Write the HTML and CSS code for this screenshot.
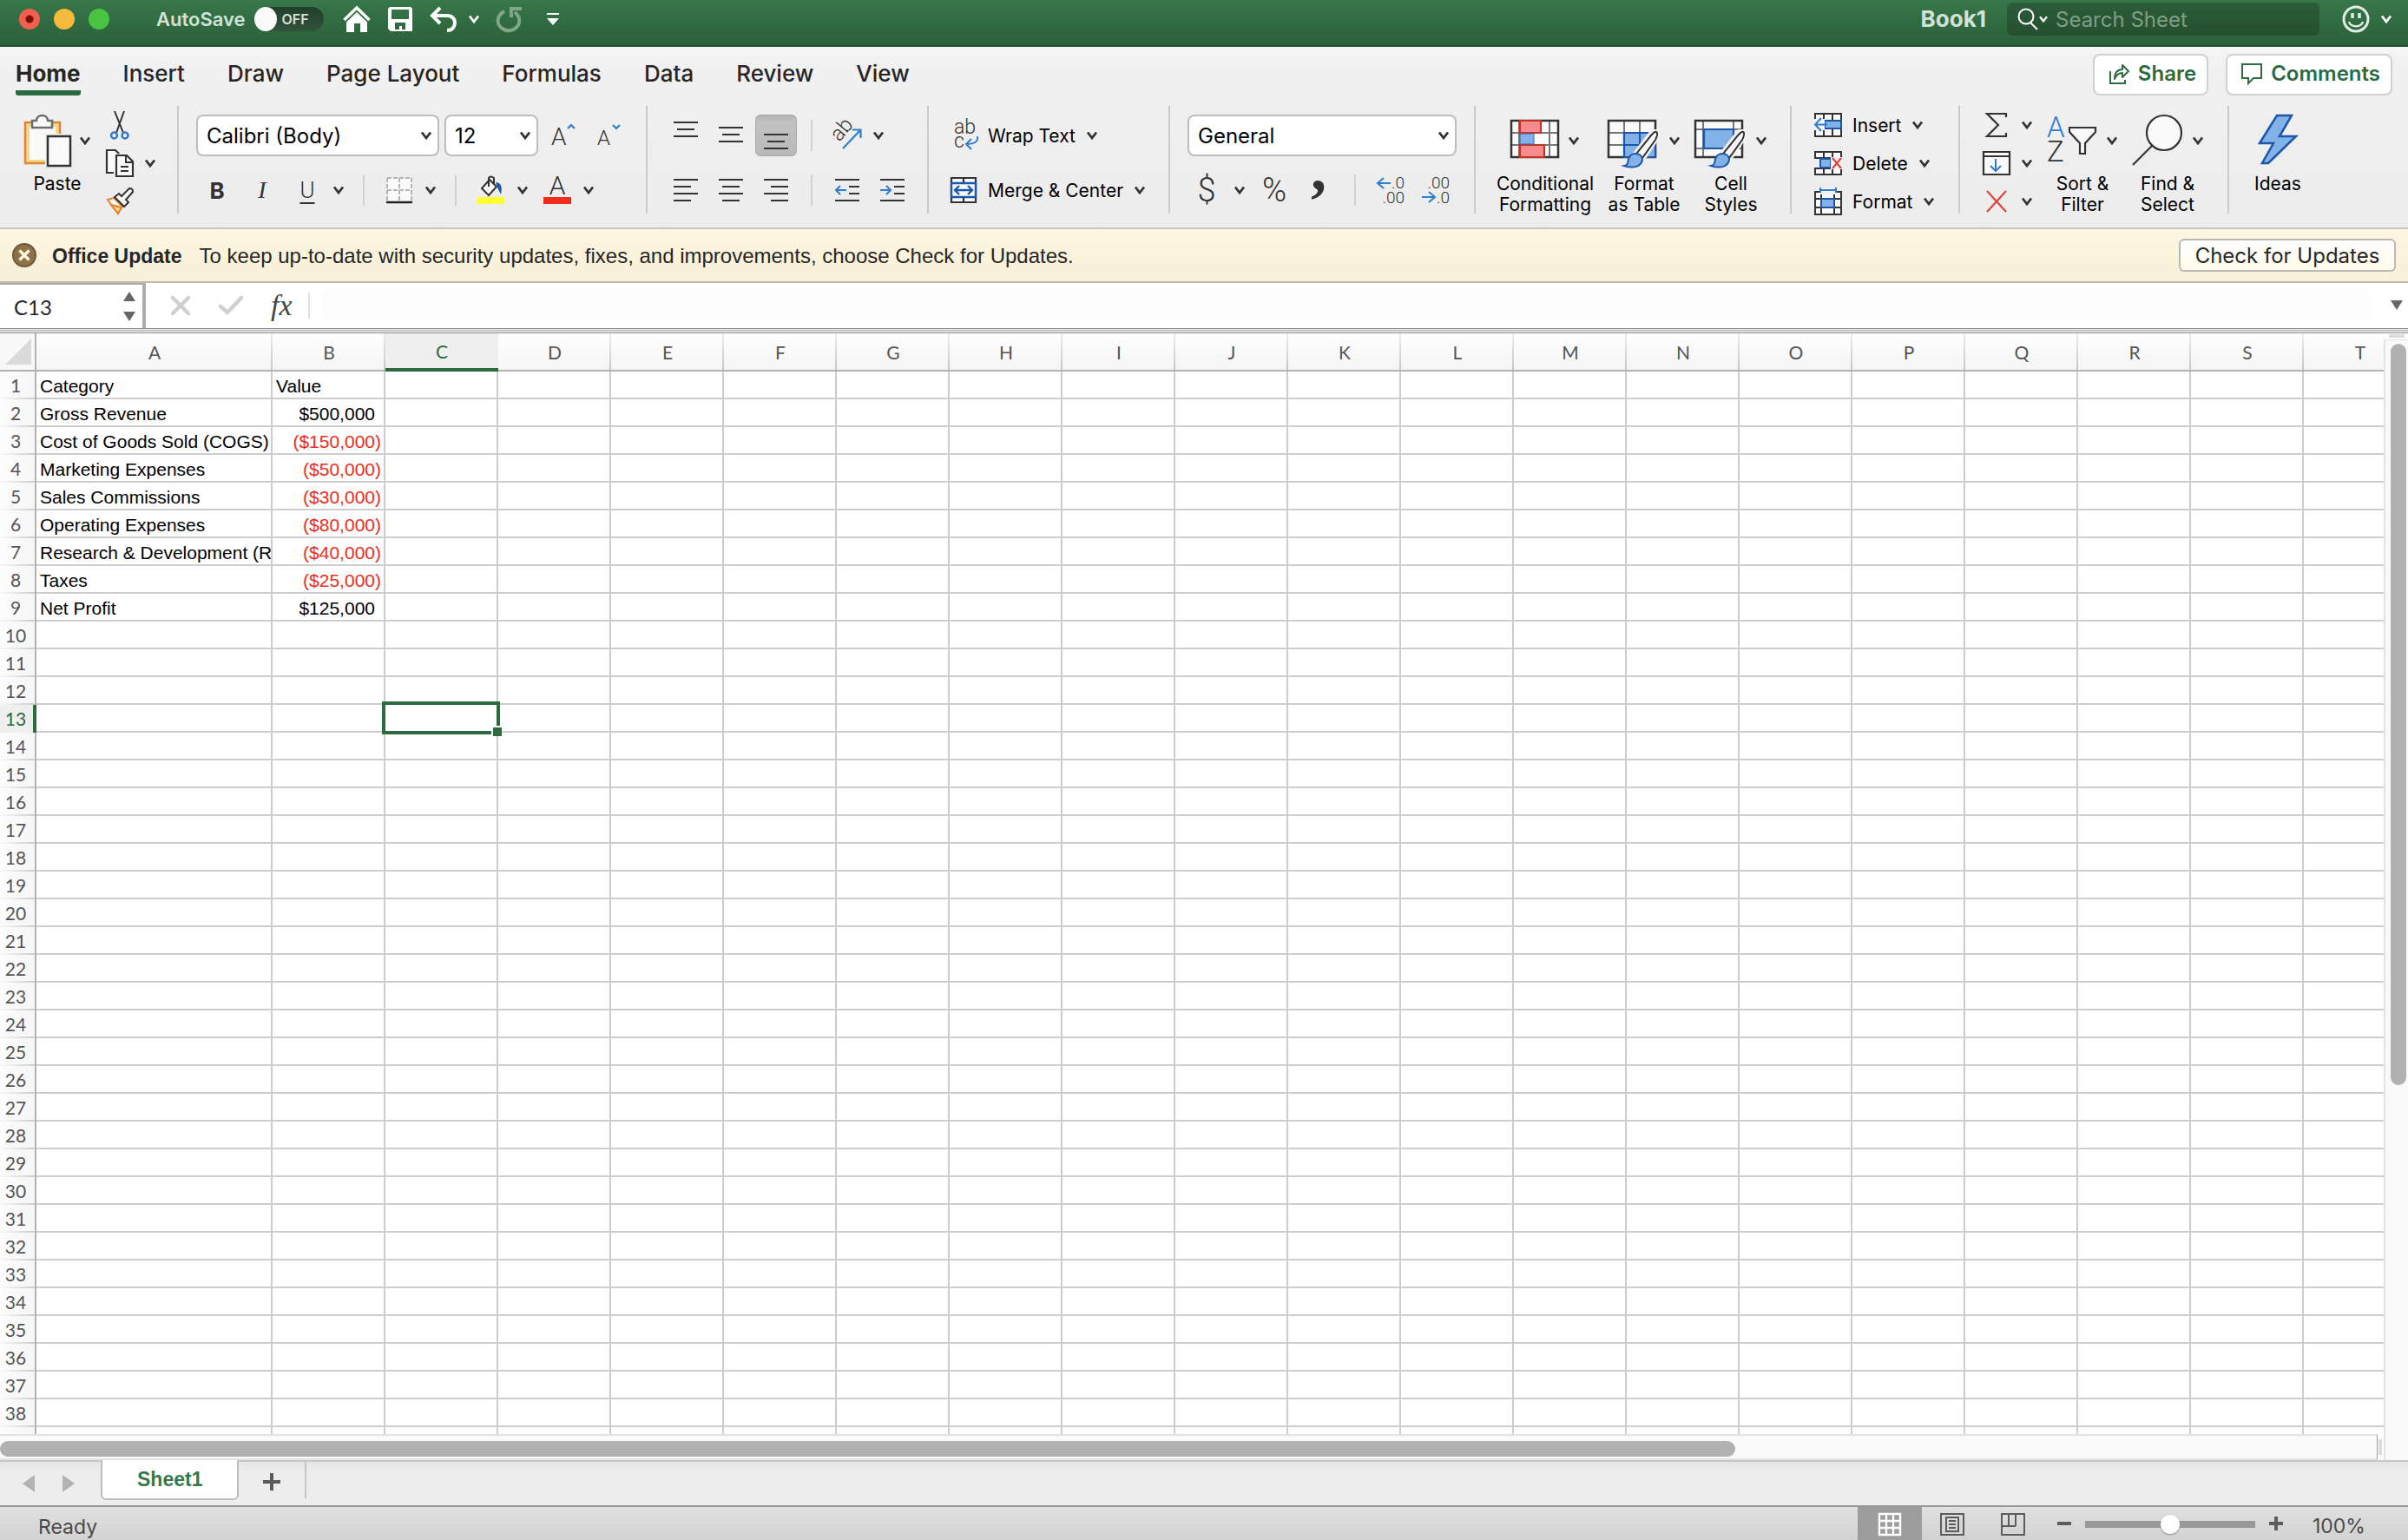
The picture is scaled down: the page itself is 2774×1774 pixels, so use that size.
FILE: index.html
```html
<!DOCTYPE html>
<html lang="en">
<head>
<meta charset="utf-8">
<title>Book1</title>
<link rel="stylesheet" href="styles.css">
<script src="grid.js" defer></script>
</head>
<body>
<svg class="defs" aria-hidden="true">
  <symbol id="chev" viewBox="0 0 14 10"><path d="M2 1.500 L7 8 L12 1.500" fill="none" stroke="currentColor" stroke-width="2.800"/></symbol>
  <symbol id="brush" viewBox="0 0 44 46">
    <path d="M40 2c3 2 2 6 0 10L26 33l-8-6L35 5c2-2 3-4 5-3z" fill="#fafafa" stroke="#f2f2f2" stroke-width="6"/>
    <path d="M41 3c2 1 1 5-1 9L25 33l-7-5L35 7c2-2 4-5 6-4z" fill="#fafafa" stroke="#333" stroke-width="2"/>
    <path d="M17 28c5 0 8 3 8 7-1 7-9 11-21 7 5-1 4-4 5-8 1-3 4-6 8-6z" fill="#83b2e8" stroke="#1c56a8" stroke-width="2"/>
  </symbol>
</svg>

<header class="titlebar">
  <div class="lights">
    <button class="light close" aria-label="Close window"></button>
    <button class="light minimise" aria-label="Minimise window"></button>
    <button class="light zoom" aria-label="Zoom window"></button>
  </div>
  <label class="autosave">AutoSave
    <span class="switch"><input type="checkbox"><span>OFF</span></span>
  </label>
  <div class="quick">
    <button aria-label="Home"><svg width="32" height="32" viewBox="0 0 32 32"><path d="M1.500 17 L16 3 L30.500 17" fill="none" stroke="#fff" stroke-width="3.500"/><path d="M4 19.500 L16 8 L28 19.500 V31 H20 V21 H13 V31 H4z" fill="#fff"/></svg></button>
    <button aria-label="Save"><svg width="28" height="28" viewBox="0 0 28 28"><path fill="#fff" fill-rule="evenodd" d="M2 0H26L28 2V28H3L0 25V2zM4 3V14H24V3zM8 18V26H13V22H16V26H20V18z"/></svg></button>
    <button class="undo" aria-label="Undo"><svg width="32" height="30" viewBox="0 0 32 30"><path d="M12 2L3 11L12 20M3 11H20C26 11 29 15 29 19C29 24 26 28 20 28" fill="none" stroke="#fff" stroke-width="4"/></svg></button>
    <button aria-label="Undo options"><svg class="chev"><use href="#chev"/></svg></button>
    <button class="redo" aria-label="Repeat"><svg width="32" height="32" viewBox="0 0 32 32"><path d="M10 7C1 12 0 22 8 27C15 32 25 28 27 20C28 15 26 11 22 8M18 14V4H30" fill="none" stroke="#7fa88a" stroke-width="4"/></svg></button>
    <button class="more" aria-label="Customise toolbar"><svg width="16" height="16" viewBox="0 0 16 16"><path d="M1 1H15V3H1zM1 7H15L8 15z" fill="#fff"/></svg></button>
  </div>
  <h1 class="book">Book1</h1>
  <label class="search">
    <svg width="24" height="26" viewBox="0 0 24 26"><circle cx="10" cy="10" r="8.500" fill="none" stroke="#fff" stroke-width="2"/><path d="M15 17L23 25" stroke="#fff" stroke-width="2"/></svg>
    <svg class="chev small"><use href="#chev"/></svg>
    <input type="search" placeholder="Search Sheet" aria-label="Search Sheet">
  </label>
  <button class="smiley" aria-label="Feedback">
    <svg width="32" height="32" viewBox="0 0 32 32" fill="none" stroke="#e2ece4" stroke-width="3"><circle cx="16" cy="16" r="14"/><path d="M12 9V15M20 9V15" stroke-width="3.500"/><path d="M8 19C10 26 22 26 24 19" stroke-width="2.500"/></svg>
    <svg class="chev"><use href="#chev"/></svg>
  </button>
</header>

<section class="ribbon">
  <nav class="tabs">
    <a href="#" class="current">Home</a><a href="#">Insert</a><a href="#">Draw</a><a href="#">Page Layout</a><a href="#">Formulas</a><a href="#">Data</a><a href="#">Review</a><a href="#">View</a>
    <div class="share">
      <button><svg width="24" height="24" viewBox="0 0 24 24" fill="none" stroke="#2b6b3f" stroke-width="2"><path d="M2 9V23H19V19"/><path d="M7 18C7 11 10 7 16 7V2L23 9L16 16V11C12 11 9 13 7 18z" stroke-linejoin="round"/></svg>Share</button>
      <button><svg width="24" height="24" viewBox="0 0 24 24" fill="none" stroke="#2b6b3f" stroke-width="2"><path d="M1 1H23V17H14L8 23V17H1z"/></svg>Comments</button>
    </div>
  </nav>

  <div class="tools">
    <div class="group clipboard">
      <button class="big">
        <span class="pic"><svg width="56" height="60" viewBox="0 0 56 60"><path d="M2 9H42V56H2z" fill="#f4d88a" stroke="#e08535" stroke-width="2.500"/><path d="M7 14H37V52H7z" fill="#fafafa"/><path d="M10 7H15C15 -1 28 -1 28 7H33V15H10z" fill="#fafafa" stroke="#6d6d6d" stroke-width="2.500"/><path d="M25 22H47V30H55V60H25z" fill="#efefef"/><path d="M28 25H54V59H28z" fill="#fafafa" stroke="#333" stroke-width="2.500"/></svg><svg class="chev"><use href="#chev"/></svg></span>
        <span class="cap">Paste</span>
      </button>
      <div class="stack">
        <button class="line" aria-label="Cut"><svg width="32" height="32" viewBox="0 0 32 32" fill="none" stroke="#333" stroke-width="2"><path d="M10 0L20 25M21 0L12 25"/><circle cx="9.500" cy="28" r="3.500" stroke="#2f7ccc" stroke-width="2.500"/><circle cx="22" cy="28" r="3.500" stroke="#2f7ccc" stroke-width="2.500"/></svg></button>
        <button class="line" aria-label="Copy"><svg width="32" height="32" viewBox="0 0 32 32" fill="#fafafa" stroke="#333" stroke-width="2.200"><path d="M9 27H1V1H11L15 5"/><path d="M12 7H24L31 14V31H12z"/><path d="M23 7V15H31M17 20H26M17 25H26" fill="none" stroke-width="2"/></svg><svg class="chev"><use href="#chev"/></svg></button>
        <button class="line" aria-label="Format Painter"><svg width="32" height="32" viewBox="0 0 32 32"><path d="M2 14L9 12L19 22L14 30z" fill="#fafafa" stroke="#e08535" stroke-width="2"/><path d="M6 20L18 23L14 30z" fill="#f4d88a" stroke="#e08535" stroke-width="2"/><path d="M10 11L15 7L18 10L27 1Q31 1 31 5L23 14L26 17L21 22z" fill="#fafafa" stroke="#333" stroke-width="2"/></svg></button>
      </div>
    </div>
    <span class="divider"></span>

    <div class="group rows">
      <div class="row">
        <span class="pick font"><select aria-label="Font"><option>Calibri (Body)</option></select><svg class="chev"><use href="#chev"/></svg></span>
        <span class="pick size"><select aria-label="Font size"><option>12</option></select><svg class="chev"><use href="#chev"/></svg></span>
        <button class="tool" aria-label="Increase font size"><svg width="28" height="30" viewBox="0 0 28 30"><text x="1" y="26" class="glyph" font-size="28">A</text><path d="M20 7L24 3L28 7" fill="none" stroke="#2f7ccc" stroke-width="2.200"/></svg></button>
        <button class="tool" aria-label="Decrease font size"><svg width="28" height="30" viewBox="0 0 28 30"><text x="2" y="26" class="glyph" font-size="24">A</text><path d="M20 3L24 7L28 3" fill="none" stroke="#2f7ccc" stroke-width="2.200"/></svg></button>
      </div>
      <div class="row">
        <button class="tool bold">B</button>
        <button class="tool italic">I</button>
        <span class="split tight"><button class="tool underline">U</button><button class="drop" aria-label="Underline options"><svg class="chev"><use href="#chev"/></svg></button></span>
        <span class="sep"></span>
        <span class="split"><button class="icon" aria-label="Borders"><svg width="32" height="32" viewBox="0 0 32 32"><path d="M2 2H30V30H2z" fill="#fafafa"/><path d="M2 2H30M2 16H30M2 2V28M16 2V28M30 2V28" stroke="#b5b5b5" stroke-width="2" stroke-dasharray="5 2"/><path d="M1 30H31" stroke="#222" stroke-width="2.500"/></svg></button><button class="drop" aria-label="Border options"><svg class="chev"><use href="#chev"/></svg></button></span>
        <span class="sep"></span>
        <span class="split"><button class="icon" aria-label="Fill colour"><svg width="32" height="32" viewBox="0 0 32 32"><path d="M5 14L14 4L22 12L13 22z" fill="#fafafa" stroke="#333" stroke-width="2"/><path d="M13 12V2Q15 -1 19 2V10" fill="none" stroke="#333" stroke-width="2"/><path d="M21 7C27 7 29 12 27 21L23 13z" fill="#1c56a8"/><path d="M0 24H32V32H0z" fill="#ffff35"/></svg></button><button class="drop" aria-label="Fill options"><svg class="chev"><use href="#chev"/></svg></button></span>
        <span class="split"><button class="icon" aria-label="Font colour"><svg width="32" height="32" viewBox="0 0 32 32"><text x="16" y="21" text-anchor="middle" class="glyph" font-size="30">A</text><path d="M0 24H32V32H0z" fill="#f02d1a"/></svg></button><button class="drop" aria-label="Font colour options"><svg class="chev"><use href="#chev"/></svg></button></span>
      </div>
    </div>
    <span class="divider"></span>

    <div class="group rows align">
      <div class="row">
        <button class="tool" aria-label="Top align"><svg width="28" height="32" viewBox="0 0 28 32"><path class="ink" d="M0 1H28M4 9H24M0 17H28"/></svg></button>
        <button class="tool" aria-label="Middle align"><svg width="28" height="32" viewBox="0 0 28 32"><path class="ink" d="M0 7H28M4 15H24M0 23H28"/></svg></button>
        <button class="tool pressed" aria-label="Bottom align"><svg width="28" height="32" viewBox="0 0 28 32"><path class="ink" d="M0 15H28M4 23H24M0 31H28"/></svg></button>
        <span class="sep"></span>
        <span class="split"><button class="icon" aria-label="Orientation"><svg width="32" height="32" viewBox="0 0 32 32"><text transform="translate(7 24) rotate(-50)" class="glyph" font-size="24">ab</text><path d="M11 31L31 10M22 9.500H31.500V19" fill="none" stroke="#2f7ccc" stroke-width="2.200"/></svg></button><button class="drop" aria-label="Orientation options"><svg class="chev"><use href="#chev"/></svg></button></span>
      </div>
      <div class="row">
        <button class="tool" aria-label="Align left"><svg width="28" height="26" viewBox="0 0 28 26"><path class="ink" d="M0 1H28M0 9H20M0 17H28M0 25H20"/></svg></button>
        <button class="tool" aria-label="Centre"><svg width="28" height="26" viewBox="0 0 28 26"><path class="ink" d="M0 1H28M4 9H24M0 17H28M4 25H24"/></svg></button>
        <button class="tool" aria-label="Align right"><svg width="28" height="26" viewBox="0 0 28 26"><path class="ink" d="M0 1H28M8 9H28M0 17H28M8 25H28"/></svg></button>
        <span class="sep"></span>
        <button class="tool" aria-label="Decrease indent"><svg width="28" height="26" viewBox="0 0 28 26"><path class="ink" d="M0 1H28M16 9H28M16 17H28M0 25H28"/><path class="blue" d="M13 13H1M6 8L1 13L6 18"/></svg></button>
        <button class="tool" aria-label="Increase indent"><svg width="28" height="26" viewBox="0 0 28 26"><path class="ink" d="M0 1H28M16 9H28M16 17H28M0 25H28"/><path class="blue" d="M0 13H12M7 8L12 13L7 18"/></svg></button>
      </div>
    </div>
    <span class="divider"></span>

    <div class="group rows wrap">
      <div class="row"><button class="line"><svg width="32" height="32" viewBox="0 0 32 32"><text x="5" y="14" class="glyph" font-size="23">ab</text><text x="5" y="30" class="glyph" font-size="23">c</text><path class="blue" d="M32 17C33 23 29 26 19 26M25 20L19 26L25 32"/></svg><span>Wrap Text</span><svg class="chev"><use href="#chev"/></svg></button></div>
      <div class="row"><button class="line"><svg width="32" height="32" viewBox="0 0 32 32"><path d="M2 2H30V30H2zM16 2V8M16 24V30" fill="#fafafa" stroke="#333" stroke-width="2.200"/><path d="M2 8H30V24H2z" fill="#fafafa" stroke="#1c56a8" stroke-width="2.400"/><path d="M6 16H26M11 11L6 16L11 21M21 11L26 16L21 21" fill="none" stroke="#1c56a8" stroke-width="2.400"/></svg><span>Merge &amp; Center</span><svg class="chev"><use href="#chev"/></svg></button></div>
    </div>
    <span class="divider"></span>

    <div class="group rows number">
      <div class="row"><span class="pick format"><select aria-label="Number format"><option>General</option></select><svg class="chev"><use href="#chev"/></svg></span></div>
      <div class="row">
        <span class="split money"><button class="tool symbol">$</button><button class="drop" aria-label="Currency options"><svg class="chev"><use href="#chev"/></svg></button></span>
        <button class="tool symbol">%</button>
        <button class="tool" aria-label="Comma style"><svg width="24" height="32" viewBox="0 0 24 32"><text x="2" y="16" class="comma">,</text></svg></button>
        <span class="sep"></span>
        <button class="tool" aria-label="Increase decimal"><svg width="32" height="32" viewBox="0 0 32 32"><text x="32" y="14" text-anchor="end" class="glyph" font-size="19">.0</text><text x="32" y="31" text-anchor="end" class="glyph" font-size="19">.00</text><path class="blue" d="M16 8H1M8 2L1 8L8 14"/></svg></button>
        <button class="tool" aria-label="Decrease decimal"><svg width="32" height="32" viewBox="0 0 32 32"><text x="32" y="14" text-anchor="end" class="glyph" font-size="19">.00</text><text x="32" y="31" text-anchor="end" class="glyph" font-size="19">.0</text><path class="blue" d="M0 24H15M8 18L15 24L8 30"/></svg></button>
      </div>
    </div>
    <span class="divider"></span>

    <div class="group styles">
      <button class="big conditional">
        <span class="pic"><svg width="56" height="60" viewBox="0 0 56 60"><path d="M1 7H55V49H1z" fill="#fafafa"/><path d="M10 7V49M45 7V49M1 21H55M1 35H55" stroke="#777" stroke-width="2"/><path d="M1 7H55V49H1z" fill="none" stroke="#333" stroke-width="2.500"/><path d="M11 7H35V21H11zM11 35H39V49H11z" fill="#f58d90" stroke="#c8301f" stroke-width="2.200"/><path d="M11 22H27V34H11z" fill="#83b2e8" stroke="#2f67b5" stroke-width="1"/></svg><svg class="chev"><use href="#chev"/></svg></span>
        <span class="cap">Conditional Formatting</span>
      </button>
      <button class="big table">
        <span class="pic"><svg width="60" height="60" viewBox="0 0 60 60"><path d="M1 7H55V49H1z" fill="#fafafa"/><path d="M19 7V49M37 7V49M1 21H55M1 35H55" stroke="#777" stroke-width="2"/><path d="M1 7H55V49H1z" fill="none" stroke="#333" stroke-width="2.500"/><path d="M19 21H55V49H19zM37 21V49M19 35H55" fill="#83b2e8" stroke="#1c56a8" stroke-width="2.200"/><use href="#brush" x="14" y="17" width="46" height="46"/></svg><svg class="chev"><use href="#chev"/></svg></span>
        <span class="cap">Format<br>as Table</span>
      </button>
      <button class="big cells">
        <span class="pic"><svg width="60" height="60" viewBox="0 0 60 60"><path d="M1 7H55V49H1z" fill="#fafafa"/><path d="M10 7V49M45 7V49M1 17H55M1 39H55" stroke="#777" stroke-width="2"/><path d="M1 7H55V49H1z" fill="none" stroke="#333" stroke-width="2.500"/><path d="M11 17H45V39H11z" fill="#83b2e8" stroke="#1c56a8" stroke-width="2.200"/><use href="#brush" x="14" y="17" width="46" height="46"/></svg><svg class="chev"><use href="#chev"/></svg></span>
        <span class="cap">Cell<br>Styles</span>
      </button>
    </div>
    <span class="divider"></span>

    <div class="group stack cellops">
      <button class="line"><svg width="32" height="32" viewBox="0 0 32 32"><path d="M1 3H31V29H1zM11 3V29M21 3V29M1 11H31M1 20H31" fill="#fafafa" stroke="#333" stroke-width="2"/><path d="M12 11H31V20H12z" fill="#83b2e8" stroke="#1c56a8" stroke-width="2"/><path d="M0 9H12V22H0z" fill="#f4f4f4"/><path class="blue" d="M15 15.500H1M8 8L1 15.500L8 23"/></svg><span>Insert</span><svg class="chev"><use href="#chev"/></svg></button>
      <button class="line"><svg width="32" height="32" viewBox="0 0 32 32"><path d="M1 3H31V10H1zM1 22H31V29H1zM11 3V10M21 3V10M11 22V29M21 22V29" fill="#fafafa" stroke="#333" stroke-width="2"/><path d="M7 11H19V21H7z" fill="#83b2e8" stroke="#1c56a8" stroke-width="2"/><path d="M19 9H32V23H19z" fill="#f2f2f2"/><path d="M21 10L31 22M31 10L21 22" stroke="#e0443a" stroke-width="2.200"/></svg><span>Delete</span><svg class="chev"><use href="#chev"/></svg></button>
      <button class="line"><svg width="32" height="32" viewBox="0 0 32 32"><path d="M1 5H31V31H1zM8 5V31M23 5V31M1 13H31M1 23H31" fill="#fafafa" stroke="#333" stroke-width="2"/><path d="M8 13H23V23H8z" fill="#83b2e8" stroke="#1c56a8" stroke-width="2"/><path d="M6 0H26V8H6z" fill="#f2f2f2"/><path class="blue" d="M7 3H25M7 0V6M25 0V6"/></svg><span>Format</span><svg class="chev"><use href="#chev"/></svg></button>
    </div>
    <span class="divider"></span>

    <div class="group editing">
      <div class="stack">
        <button class="line" aria-label="AutoSum"><svg width="32" height="32" viewBox="0 0 32 32"><path d="M27 7V3H5L18 16L5 29H27V25" fill="none" stroke="#333" stroke-width="2.200"/></svg><svg class="chev"><use href="#chev"/></svg></button>
        <button class="line" aria-label="Fill"><svg width="32" height="32" viewBox="0 0 32 32"><path d="M1 3H31V29H1zM1 8H31" fill="#fafafa" stroke="#333" stroke-width="2.200"/><path class="blue" d="M15 11V25M9 19L15 25L21 19"/></svg><svg class="chev"><use href="#chev"/></svg></button>
        <button class="line" aria-label="Clear"><svg width="32" height="32" viewBox="0 0 32 32"><path d="M5 4L27 28M27 4L5 28" stroke="#e0443a" stroke-width="2.200"/></svg><svg class="chev"><use href="#chev"/></svg></button>
      </div>
      <button class="big">
        <span class="pic"><svg width="58" height="60" viewBox="0 0 58 60"><text x="0" y="26" font-size="33" class="glyph first">A</text><text x="0" y="54" font-size="33" class="glyph">Z</text><path d="M26 15H56V20L44 33V45H38V33L26 20z" fill="#fafafa" stroke="#333" stroke-width="2.200"/></svg><svg class="chev"><use href="#chev"/></svg></span>
        <span class="cap">Sort &amp;<br>Filter</span>
      </button>
      <button class="big">
        <span class="pic"><svg width="60" height="60" viewBox="0 0 60 60"><path d="M24 36L2 58" stroke="#333" stroke-width="2.200"/><circle cx="38" cy="21" r="20" fill="#fafafa" stroke="#333" stroke-width="2.200"/></svg><svg class="chev"><use href="#chev"/></svg></span>
        <span class="cap">Find &amp;<br>Select</span>
      </button>
    </div>
    <span class="divider"></span>

    <div class="group ideas">
      <button class="big">
        <span class="pic"><svg width="46" height="60" viewBox="0 0 46 60"><path d="M22 1H39L25 25H44L12 56H5L18 33H2z" fill="#83b2e8" stroke="#1c56a8" stroke-width="2.500"/></svg></span>
        <span class="cap">Ideas</span>
      </button>
    </div>
  </div>
</section>

<section class="notice">
  <button class="dismiss" aria-label="Dismiss"><svg width="28" height="28" viewBox="0 0 28 28"><circle cx="14" cy="14" r="13" fill="#8d7147" stroke="#6f5a3a" stroke-width="2"/><path d="M8.500 8.500L19.500 19.500M19.500 8.500L8.500 19.500" stroke="#fff6df" stroke-width="3.500"/></svg></button>
  <strong>Office Update</strong>
  <p>To keep up-to-date with security updates, fixes, and improvements, choose Check for Updates.</p>
  <button class="check">Check for Updates</button>
</section>

<section class="formula">
  <div class="namebox">
    <input type="text" value="C13" aria-label="Name box">
    <svg width="14" height="34" viewBox="0 0 14 34"><path d="M7 0L14 11H0zM7 34L14 23H0z" fill="#666"/></svg>
  </div>
  <button aria-label="Cancel"><svg width="24" height="24" viewBox="0 0 24 24"><path d="M3 3L21 21M21 3L3 21" stroke="#d0d0d0" stroke-width="4.500" stroke-linecap="round"/></svg></button>
  <button aria-label="Enter"><svg width="28" height="24" viewBox="0 0 28 24"><path d="M2 13L10 20L26 3" fill="none" stroke="#d0d0d0" stroke-width="4.500" stroke-linecap="round"/></svg></button>
  <button class="fx">fx</button>
  <span class="bar"></span>
  <input class="entry" type="text" aria-label="Formula">
  <button class="expand" aria-label="Expand formula bar"><svg width="14" height="12" viewBox="0 0 14 12"><path d="M0 0H14L7 11z" fill="#666"/></svg></button>
</section>

<main class="sheet">
  <div class="cells"><table><thead></thead><tbody></tbody></table></div>
  <div class="vscroll"><div class="grip"></div><div class="track"><div class="thumb"></div></div></div>
</main>
<div class="hscroll"><div class="track"><div class="thumb"></div></div><div class="grip"></div><div class="corner"></div></div>

<nav class="sheets">
  <button class="step" aria-label="Previous sheet"><svg width="14" height="20" viewBox="0 0 14 20"><path d="M14 0V20L0 10z" fill="#b3b3b3"/></svg></button>
  <button class="step" aria-label="Next sheet"><svg width="14" height="20" viewBox="0 0 14 20"><path d="M0 0V20L14 10z" fill="#b3b3b3"/></svg></button>
  <a href="#" class="sheettab">Sheet1</a>
  <button class="add" aria-label="New sheet"><svg width="20" height="20" viewBox="0 0 20 20"><path d="M10 0V20M0 10H20" stroke="#5a5a5a" stroke-width="4"/></svg></button>
</nav>

<footer class="status">
  <span class="ready">Ready</span>
  <button class="view on" aria-label="Normal view"><svg width="26" height="28" viewBox="0 0 26 28"><path d="M1 2H25V26H1zM9 2V26M17 2V26M1 10H25M1 18H25" fill="none" stroke="#fff" stroke-width="2.400"/></svg></button>
  <button class="view" aria-label="Page layout"><svg width="28" height="28" viewBox="0 0 28 28"><path d="M1 2H27V26H1zM7 6H21V22H7zM10 10H18M10 14H18M10 18H18" fill="none" stroke="#5c5c5c" stroke-width="2"/></svg></button>
  <button class="view" aria-label="Page break preview"><svg width="28" height="28" viewBox="0 0 28 28"><path d="M1 2H27V26H1zM9 2V16M17 2V16M1 16H17" fill="none" stroke="#5c5c5c" stroke-width="2"/></svg></button>
  <button class="step" aria-label="Zoom out"><svg width="16" height="16" viewBox="0 0 16 16"><path d="M0 8H16" stroke="#5c5c5c" stroke-width="4"/></svg></button>
  <input type="range" min="0" max="100" value="50" aria-label="Zoom">
  <button class="step" aria-label="Zoom in"><svg width="16" height="16" viewBox="0 0 16 16"><path d="M0 8H16M8 0V16" stroke="#5c5c5c" stroke-width="4"/></svg></button>
  <span class="percent">100%</span>
</footer>
</body>
</html>
```
FILE: styles.css
```css
*, *::before, *::after { box-sizing: border-box; }
body {
  margin: 0;
  height: 100vh;
  display: flex;
  flex-direction: column;
  overflow: hidden;
  background: #fff;
  color: #000;
  font-family: Inter, "Liberation Sans", sans-serif;
  font-size: 21px;
}
button, input, select { font: inherit; color: inherit; margin: 0; }
button {
  padding: 0;
  border: 0;
  background: none;
  display: flex;
  align-items: center;
  justify-content: center;
  flex: none;
}
a { color: inherit; text-decoration: none; }
svg { display: block; flex: none; overflow: visible; }
.defs { position: absolute; width: 0; height: 0; }
.chev { width: 14px; height: 10px; color: #333; }
.chev.small { width: 12px; height: 8px; }

/* Title bar */
.titlebar {
  flex: none;
  height: 54px;
  display: flex;
  align-items: center;
  padding: 0 18px 8px 22px;
  background: linear-gradient(#37774a, #2a6038);
  border-bottom: 2px solid #234f2f;
  color: #d3e2d6;
}
.titlebar .chev { color: #fff; }
.lights { display: flex; gap: 16px; }
.light { width: 24px; height: 24px; border-radius: 50%; }
.close { background: radial-gradient(#7a0f08 0 4px, #f1604f 5px); }
.minimise { background: #f5b93b; }
.zoom { background: #4ac342; }
.autosave {
  display: flex;
  align-items: center;
  gap: 10px;
  margin-left: 54px;
  font-size: 22px;
  font-weight: 600;
}
.switch { display: grid; align-items: center; }
.switch > * { grid-area: 1 / 1; }
.switch input {
  appearance: none;
  width: 80px;
  height: 28px;
  border-radius: 14px;
  background: linear-gradient(#21402b, #33523d);
}
.switch input::before {
  content: "";
  display: block;
  width: 26px;
  height: 28px;
  border-radius: 50%;
  background: #fafafa;
}
.switch span { padding-left: 32px; font-size: 16px; }
.quick { display: flex; align-items: center; margin-left: 22px; gap: 20px; }
.quick .undo { margin-right: -8px; }
.quick .redo { margin: 0 6px 0 -2px; }
.book { margin: 0 24px 0 auto; font-size: 26px; font-weight: 700; line-height: 32px; }
.search {
  width: 360px;
  height: 38px;
  display: flex;
  align-items: center;
  padding: 0 12px;
  border-radius: 6px;
  background: linear-gradient(#2c5d3a, #254f31);
}
.search input {
  flex: 1;
  min-width: 0;
  padding: 0 8px;
  border: 0;
  background: none;
  font-size: 24px;
  appearance: none;
}
.search input::placeholder { color: #7d9f86; opacity: 1; }
.smiley { gap: 12px; margin-left: 26px; }

/* Ribbon */
.ribbon {
  flex: none;
  height: 210px;
  border-bottom: 2px solid #c6c4c6;
  background: linear-gradient(#f6f6f6, #f1f1f1 20px, #ececec);
}
.tabs {
  height: 68px;
  display: flex;
  align-items: flex-start;
  gap: 49px;
  padding: 8px 18px 0;
  font-size: 26px;
  font-weight: 500;
  line-height: 46px;
  color: #262626;
}
.tabs a { white-space: nowrap; }
.tabs .current { height: 48px; border-bottom: 6px solid #2b6b3f; border-radius: 0 0 3px 3px; font-weight: 700; }
.share { display: flex; gap: 20px; margin-left: auto; }
.share button {
  height: 48px;
  gap: 10px;
  padding: 0 12px 2px 16px;
  border: 2px solid #d0d0d0;
  border-radius: 8px;
  background: #fff;
  color: #2b6b3f;
  font-size: 24px;
  font-weight: 600;
}
.tools { display: flex; align-items: flex-start; white-space: nowrap; }
.divider { flex: none; width: 2px; height: 124px; background: #cacaca; }
.group { flex: none; display: flex; align-items: flex-start; }
.rows { flex-direction: column; gap: 15px; padding: 10px 20px 0; }
.row { display: flex; align-items: center; height: 48px; gap: 4px; }
.tool { width: 48px; height: 48px; }
.icon { width: 32px; height: 48px; }
.drop { width: 24px; height: 48px; }
.pressed {
  border: 1px solid #aaa;
  border-radius: 6px;
  background: linear-gradient(#b2b2b2, #c2c2c2 8px, #b9b9b9);
}
.split { display: flex; gap: 8px; margin-left: 8px; }
.split.tight { gap: 0; margin-left: 0; }
.sep { width: 2px; height: 36px; margin: 0 12px; background: #d2d2d2; }
.ink { fill: none; stroke: #333; stroke-width: 2px; }
.blue { fill: none; stroke: #2f7ccc; stroke-width: 2px; }
.glyph { font-family: Roboto, "Liberation Sans", sans-serif; font-weight: 300; fill: #333; }
.glyph.first { fill: #2f7ccc; }
.comma { font-family: "Liberation Serif", serif; font-weight: 700; font-size: 72px; fill: #333; }
.bold { font-weight: 700; font-size: 26px; color: #333; }
.italic { font-family: "Liberation Serif", serif; font-style: italic; font-size: 28px; color: #333; }
.underline { font-family: Roboto, sans-serif; text-decoration: underline; text-underline-offset: 5px; font-size: 26px; font-weight: 300; color: #333; }
.symbol { font-family: Roboto, sans-serif; font-weight: 300; font-size: 38px; color: #333; }
.money { gap: 4px; margin-left: 0; }
.money .tool { width: 44px; }
.pick { display: grid; align-items: center; }
.pick > * { grid-area: 1 / 1; }
.pick .chev { justify-self: end; margin-right: 8px; pointer-events: none; }
.pick select {
  appearance: none;
  height: 48px;
  width: 100%;
  padding: 0 28px 0 10px;
  border: 2px solid #bdbdbd;
  border-radius: 8px;
  background: #fff;
  font-size: 24px;
}
.pick.font { width: 280px; }
.pick.size { width: 108px; margin-left: 2px; }
.pick.format { width: 310px; }
.line { height: 44px; gap: 12px; }
.stack { display: flex; flex-direction: column; align-items: flex-start; }
.big { flex-direction: column; gap: 8px; padding-top: 10px; }
.pic { display: flex; align-items: center; gap: 10px; height: 60px; }
.cap { display: block; line-height: 24px; text-align: center; white-space: normal; }
.clipboard { padding: 0 24px 0 20px; gap: 10px; }
.clipboard .big { width: 92px; }
.clipboard .pic { gap: 8px; }
.align { padding-right: 16px; }
.wrap { width: 276px; padding-left: 24px; }
.styles { padding: 0 24px 0 22px; gap: 4px; }
.conditional { width: 116px; }
.table { width: 104px; }
.styles .cells { width: 88px; }
.cellops { width: 192px; padding-left: 26px; }
.editing { padding: 0 20px 0 26px; }
.editing .stack { margin-right: 8px; }
.editing .big { width: 98px; }
.ideas { padding-left: 16px; }
.ideas .big { width: 80px; }

/* Update notice */
.notice {
  flex: none;
  height: 62px;
  display: flex;
  align-items: center;
  padding: 0 14px;
  border-bottom: 2px solid #c1baa4;
  background: linear-gradient(#fff6df, #f7efd8);
  color: #262626;
  font-family: "Liberation Sans", Arial, sans-serif;
  font-size: 24px;
}
.notice strong { margin: 2px 20px 0 18px; font-size: 23px; }
.notice p { margin: 2px 0 0; white-space: nowrap; }
.check {
  width: 250px;
  height: 38px;
  margin-left: auto;
  border: 2px solid #b8b8b8;
  border-radius: 6px;
  background: linear-gradient(#fff, #fffae9);
  font-family: Inter, sans-serif;
}

/* Formula bar */
.formula {
  flex: none;
  height: 58px;
  display: flex;
  align-items: center;
  padding: 0 6px 6px 0;
  background: linear-gradient(#fff 52px, #8c8c8c 52px 53px, #e6e6e6 53px 54px, #c4c4c4 54px 56px, #f4f4f4 56px 57px, #8c8c8c 57px);
}
.namebox {
  width: 168px;
  height: 52px;
  display: flex;
  align-items: center;
  padding: 0 8px 0 16px;
  border: solid #adadad;
  border-width: 2px 4px 0 0;
  margin-right: 28px;
}
.namebox input { flex: 1; min-width: 0; padding: 0; border: 0; background: none; font-family: Lato, sans-serif; font-size: 24px; color: #262626; }
.formula button { margin-right: 32px; }
.formula .fx { margin-right: 18px; font-family: "Liberation Serif", serif; font-style: italic; font-size: 34px; line-height: 36px; color: #444; }
.bar { width: 2px; height: 30px; margin-right: 14px; background: #e0e0e0; }
.entry { flex: 1; min-width: 0; height: 38px; border: 0; background: #fdfdfd; font-size: 24px; }
.formula .expand { margin: 0 0 0 22px; }

/* Grid */
.sheet { flex: 1; min-height: 0; display: flex; }
.sheet .cells { flex: 1; min-width: 0; overflow: hidden; }
table { table-layout: fixed; border-spacing: 0; width: 0; font-family: "Liberation Sans", Arial, sans-serif; font-size: 21px; }
th, td { padding: 0; overflow: hidden; white-space: nowrap; }
th { font-family: Lato, sans-serif; font-weight: 400; color: #555; text-align: center; }
.w-head { width: 42px; }
.w-wide { width: 272px; }
.w-col { width: 130px; }
thead th {
  height: 44px;
  border-bottom: 2px solid #b2b2b2;
  background: linear-gradient(#ececec, #c8c8c8) right / 2px 100% no-repeat, linear-gradient(#fefefe, #f5f5f5);
}
thead .active { border-bottom: 4px solid #2b6b3f; background: #efefef; color: #2b6b3f; }
thead .all { border-right: 2px solid #b2b2b2; background: #f8f8f8; }
.all svg { margin-left: 6px; }
tbody th {
  height: 32px;
  line-height: 28px;
  border-right: 2px solid #b2b2b2;
  background: linear-gradient(90deg, #fafafa, #ccc) bottom / 100% 2px no-repeat, linear-gradient(90deg, #fdfdfd, #f6f6f6);
  padding-right: 4px;
}
tbody .active { border-right: 4px solid #2b6b3f; background-color: #efefef; background-image: none; color: #2b6b3f; padding-right: 2px; }
td { height: 32px; line-height: 26px; padding: 4px 3px 0 4px; border: solid #cdcdcd; border-width: 0 2px 2px 0; }
.amount { text-align: right; }
.amount.plus { padding-right: 10px; }
.amount.minus { color: #f02d1a; }
td.selected { position: relative; overflow: visible; }
.frame { position: absolute; inset: -4px; border: 4px solid #2b6b3f; }
.frame::after {
  content: "";
  position: absolute;
  right: -6px;
  bottom: -6px;
  width: 12px;
  height: 12px;
  border: solid #fff;
  border-width: 2px 0 0 2px;
  background: #2b6b3f;
}

/* Scroll bars */
.vscroll { flex: none; width: 28px; display: flex; flex-direction: column; }
.vscroll .grip { height: 4px; width: 18px; margin: 1px 0 2px 6px; background: #dcdcdc; }
.vscroll .track { flex: 1; padding: 4px 0 0 6px; border: solid #e3e3e3; border-width: 1px 0 0 2px; background: #fafafa; }
.vscroll .thumb { width: 18px; height: 68%; border-radius: 9px; background: #b1b1b1; }
.hscroll { flex: none; height: 30px; display: flex; }
.hscroll .track { flex: 1; padding-top: 6px; border: solid #e3e3e3; border-width: 2px 1px 2px 0; border-right-color: #999; background: #fafafa; }
.hscroll .thumb { width: 73%; height: 18px; border-radius: 9px; background: #b1b1b1; }
.hscroll .grip { width: 4px; height: 18px; margin: 6px 2px 0 1px; background: #dcdcdc; }
.hscroll .corner { width: 28px; border-left: 2px solid #e3e3e3; background: #fafafa; }

/* Sheet tabs */
.sheets {
  flex: none;
  height: 54px;
  display: flex;
  align-items: flex-start;
  border-top: 2px solid #c6c6c6;
  border-bottom: 2px solid #999;
  background: linear-gradient(#e4e4e4, #ededed 8px);
}
.sheets .step { height: 50px; width: 14px; margin-left: 26px; }
.sheets .step + .step { margin-left: 32px; }
.sheettab {
  height: 46px;
  margin: -2px 0 0 30px;
  padding: 0 40px;
  line-height: 44px;
  border: solid #bdbdbd;
  border-width: 0 2px 2px;
  border-radius: 0 0 6px 6px;
  background: #fff;
  color: #34794b;
  font-size: 23px;
  font-weight: 700;
  font-family: "Liberation Sans", Arial, sans-serif;
}
.add { width: 70px; height: 42px; padding: 4px 0 0 20px; justify-content: flex-start; margin-left: 8px; border-right: 2px solid #c6c6c6; }

/* Status bar */
.status {
  flex: none;
  height: 38px;
  display: flex;
  align-items: center;
  padding-right: 46px;
  background: linear-gradient(#e0e0e0, #d2d2d2);
  color: #4a4a4a;
  font-size: 23px;
}
.ready { margin: 8px auto 0 44px; }
.view { width: 70px; height: 38px; padding-top: 2px; }
.view.on { width: 74px; background: #9d9d9d; }
.status .step { width: 32px; height: 38px; }
.status .view:nth-of-type(3) { margin-right: 8px; }
.status input {
  appearance: none;
  width: 196px;
  height: 22px;
  margin: 2px 8px 0;
  background: linear-gradient(#989898, #989898) center / 100% 8px no-repeat;
}
.status input::-webkit-slider-thumb { appearance: none; width: 22px; height: 22px; border-radius: 50%; background: #fff; box-shadow: 0 1px 2px #888; }
.percent { width: 64px; margin: 6px 0 0 26px; }
```
FILE: grid.js
```js
// Sheet contents, one entry per filled row.
const rows = [
  ["Category", "Value"],
  ["Gross Revenue", 500000],
  ["Cost of Goods Sold (COGS)", -150000],
  ["Marketing Expenses", -50000],
  ["Sales Commissions", -30000],
  ["Operating Expenses", -80000],
  ["Research & Development (R&D)", -40000],
  ["Taxes", -25000],
  ["Net Profit", 125000],
];
const active = { row: 13, col: 3 };
const HEAD = 42, WIDE = 272, COL = 130, HEADER = 44, ROW = 32;

function make(tag, className, text) {
  const el = document.createElement(tag);
  if (className) el.className = className;
  if (text !== undefined) el.textContent = text;
  return el;
}

function money(n) {
  const s = "$" + Math.abs(n).toLocaleString("en-US");
  return n < 0 ? "(" + s + ")" : s;
}

// Draws as many columns and rows as the window shows.
function draw() {
  const box = document.querySelector(".sheet .cells");
  const cols = 1 + Math.ceil((box.clientWidth - HEAD - WIDE) / COL);
  const count = Math.ceil((box.clientHeight - HEADER) / ROW);

  const head = make("tr");
  const corner = make("th", "all w-head");
  corner.innerHTML = '<svg width="30" height="30" viewBox="0 0 30 30"><path d="M30 0V30H0z" fill="#dadada"/></svg>';
  head.append(corner);
  for (let c = 1; c <= cols; c++) {
    const width = c === 1 ? "w-wide" : "w-col";
    const letter = (c > 26 ? "A" : "") + String.fromCharCode(65 + (c - 1) % 26);
    head.append(make("th", width + (c === active.col ? " active" : ""), letter));
  }
  document.querySelector("thead").replaceChildren(head);

  const body = [];
  for (let r = 1; r <= count; r++) {
    const tr = make("tr");
    const full = r * ROW + HEADER <= box.clientHeight;
    tr.append(make("th", r === active.row ? "active" : "", full ? r : ""));
    for (let c = 1; c <= cols; c++) {
      const td = make("td");
      const value = (rows[r - 1] || [])[c - 1];
      if (typeof value === "number") {
        td.className = "amount " + (value < 0 ? "minus" : "plus");
        td.textContent = money(value);
      } else if (value) {
        td.textContent = value;
      }
      if (r === active.row && c === active.col) {
        td.className = "selected";
        td.append(make("div", "frame"));
      }
      tr.append(td);
    }
    body.push(tr);
  }
  document.querySelector("tbody").replaceChildren(...body);
}

draw();
addEventListener("resize", draw);
```
